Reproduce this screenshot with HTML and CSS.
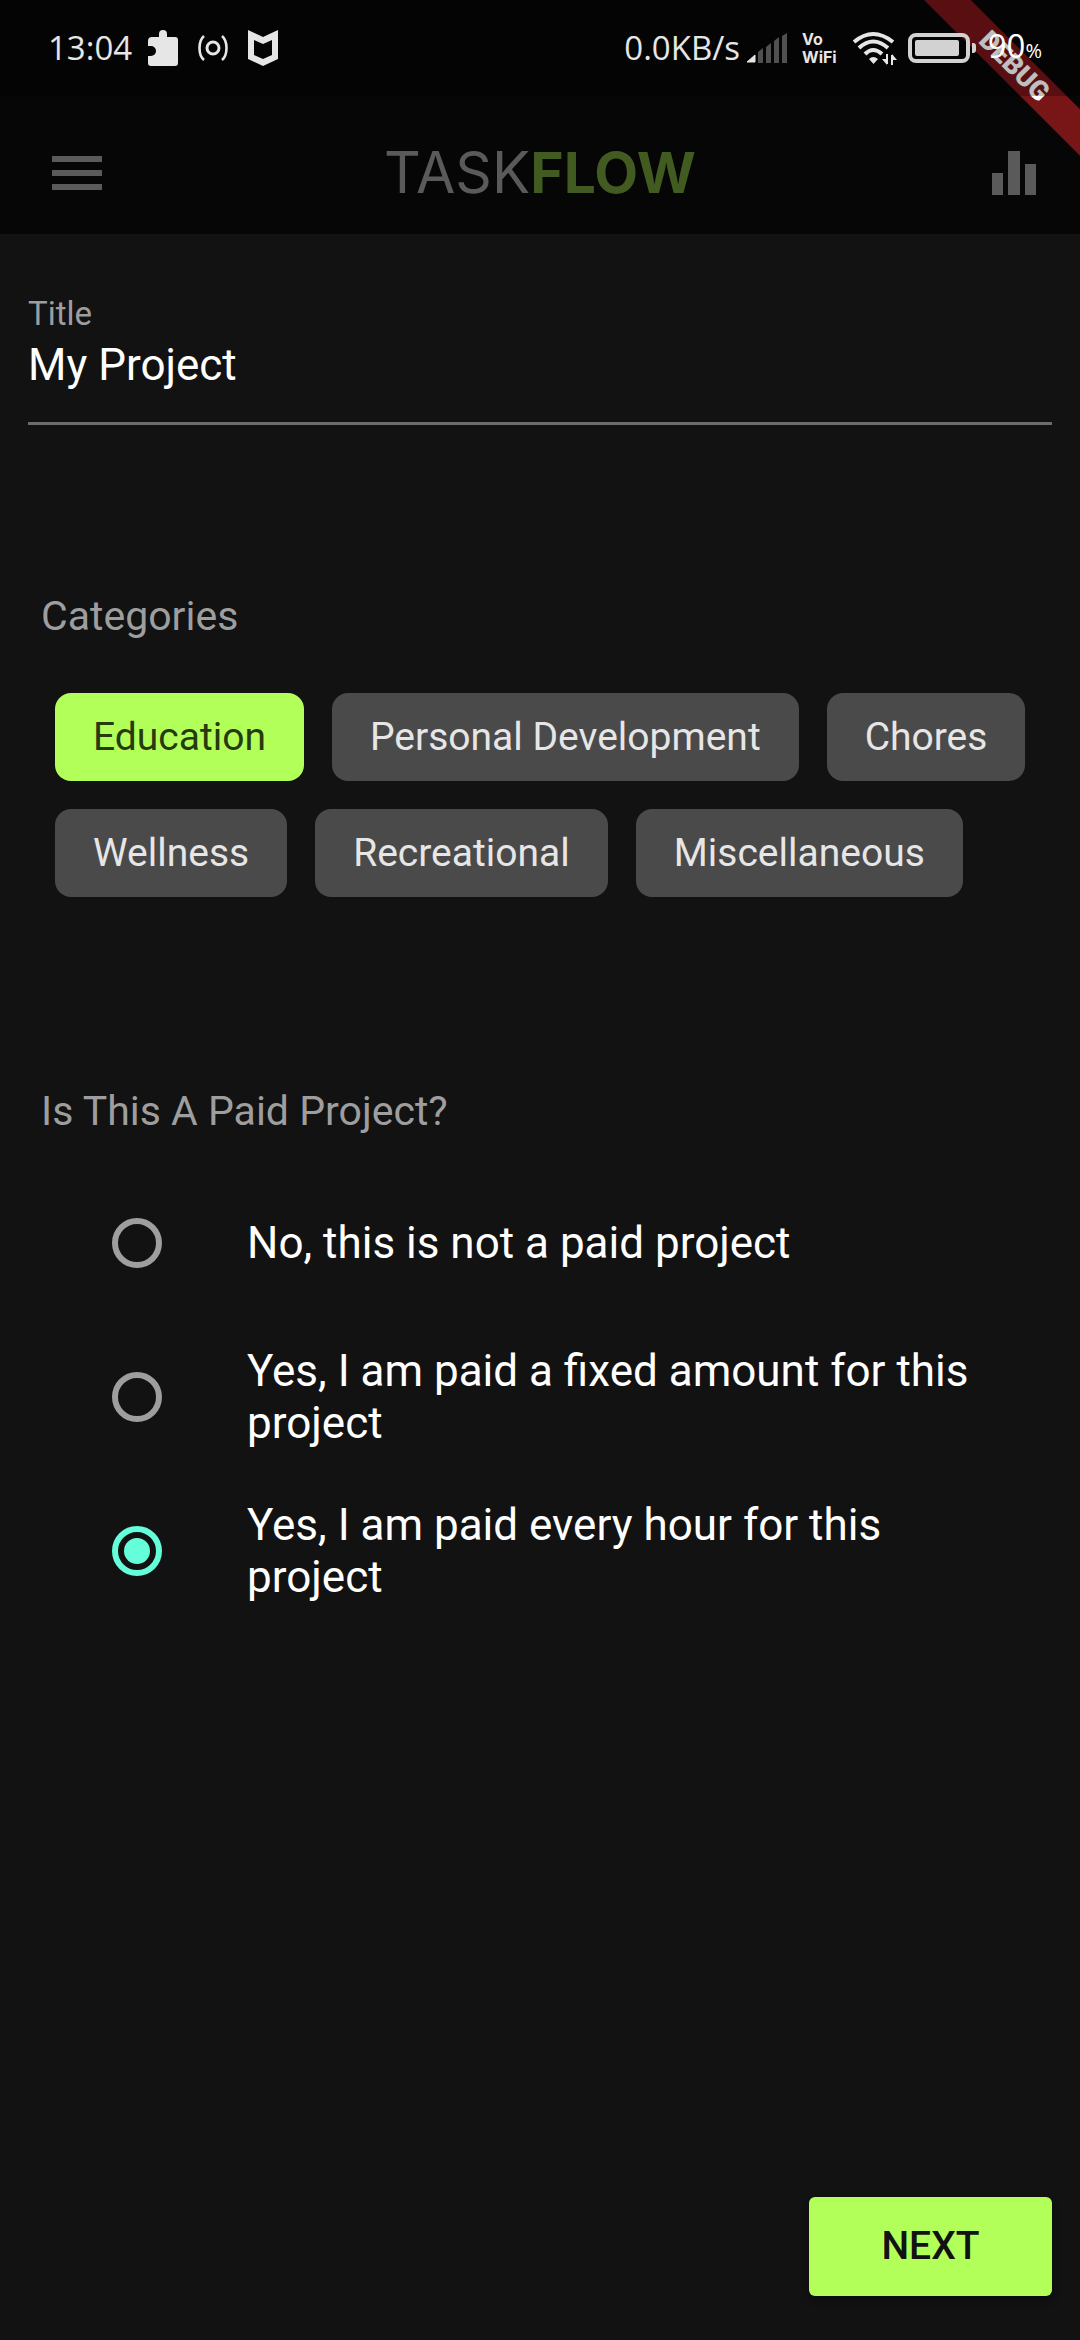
FILE: index.html
```html
<!DOCTYPE html>
<html lang="en">
<head>
<meta charset="utf-8">
<meta name="viewport" content="width=device-width, initial-scale=1">
<title>Taskflow – New project</title>
<link rel="stylesheet" href="styles.css">
</head>
<body>
<div class="app">
  <header class="top">
    <div class="status">
      <div class="status-group">
        <span class="clock">13:04</span>
        <svg width="30" height="36" viewBox="0 0 30 36" fill="currentColor" aria-hidden="true"><path d="M4 7h7V4a4 4 0 0 1 8 0v3h8a3 3 0 0 1 3 3v23a3 3 0 0 1-3 3H3a3 3 0 0 1-3-3v-7h3a5 5 0 0 0 0-10H0v-5a4 4 0 0 1 4-4z"/></svg>
        <svg width="30" height="26" viewBox="0 0 30 26" fill="none" stroke="currentColor" stroke-width="3" aria-hidden="true"><circle cx="15" cy="13" r="6"/><path d="M6 1C0 6 0 20 6 25M24 1C30 6 30 20 24 25" stroke-width="2.6"/></svg>
        <svg width="30" height="36" viewBox="0 0 30 36" fill="currentColor" aria-hidden="true"><path fill-rule="evenodd" d="M0 0l15 7 15-7v29l-15 7-15-7zM6 10v15l9 4 9-4V10l-9 4z"/></svg>
      </div>
      <div class="status-group status-right">
        <span class="speed">0.0KB/s</span>
        <svg width="41" height="30" viewBox="0 0 41 30" aria-hidden="true"><path d="M0 29l8-7v7z" fill="#e6e6e6" stroke="#e6e6e6"/><path d="M11 19l5-4v15h-5zM19 14l5-4v20h-5zM27 8l5-4v26h-5zM35 3l5-3v30h-5z" fill="#505050"/></svg>
        <span class="vowifi"><span>Vo</span><span>WiFi</span></span>
        <svg width="46" height="36" viewBox="0 0 46 36" fill="none" stroke="currentColor" stroke-width="4" aria-hidden="true"><path d="M3 12Q22 -4 42 12M8 18Q22 5 37 18M14 24Q22 16 31 24"/><path d="M18 29Q22 25 27 29L22.500 34z" fill="currentColor" stroke="none"/><path d="M36 24v10M41 25v10" stroke-width="2"/><path d="M31 29h5v6zM41 24l5 6h-5z" fill="currentColor" stroke="none"/></svg>
        <svg width="69" height="30" viewBox="0 0 69 30" aria-hidden="true"><rect x="2" y="2" width="58" height="26" rx="6" fill="none" stroke="#d2d2d2" stroke-width="4"/><rect x="7" y="7" width="44" height="16" rx="2" fill="#d2d2d2"/><path d="M64 10h1a3 3 0 0 1 3 3v4a3 3 0 0 1-3 3h-1z" fill="#d2d2d2"/></svg>
        <span class="battery">90<small>%</small></span>
      </div>
    </div>
    <div class="debug"><span class="ribbon">DEBUG</span></div>
    <nav class="bar">
      <button class="icon-button menu" type="button" aria-label="Menu"><svg width="50" height="34" viewBox="0 0 50 34" fill="currentColor"><path d="M0 0h50v6H0zM0 14h50v6H0zM0 28h50v6H0z"/></svg></button>
      <h1 class="logo">TASK<b>FLOW</b></h1>
      <button class="icon-button stats" type="button" aria-label="Statistics"><svg width="44" height="44" viewBox="0 0 44 44" fill="currentColor"><path d="M0 22h11v22H0zM16 0h12v44H16zM33 13h11v31H33z"/></svg></button>
    </nav>
  </header>
  <main>
    <form class="form">
      <div class="field">
        <label for="title">Title</label>
        <input id="title" type="text" value="My Project">
      </div>
      <section class="categories">
        <h2>Categories</h2>
        <div class="chips">
          <button type="button" class="chip selected" aria-pressed="true">Education</button>
          <button type="button" class="chip" aria-pressed="false">Personal Development</button>
          <button type="button" class="chip" aria-pressed="false">Chores</button>
          <button type="button" class="chip" aria-pressed="false">Wellness</button>
          <button type="button" class="chip" aria-pressed="false">Recreational</button>
          <button type="button" class="chip" aria-pressed="false">Miscellaneous</button>
        </div>
      </section>
      <fieldset class="paid">
        <legend>Is This A Paid Project?</legend>
        <label class="option"><input type="radio" name="paid" value="none"><span>No, this is not a paid project</span></label>
        <label class="option"><input type="radio" name="paid" value="fixed"><span>Yes, I am paid a fixed amount for this project</span></label>
        <label class="option"><input type="radio" name="paid" value="hourly" checked><span>Yes, I am paid every hour for this project</span></label>
      </fieldset>
      <button class="next" type="submit">NEXT</button>
    </form>
  </main>
</div>
</body>
</html>
```
FILE: styles.css
```css
* {
  box-sizing: border-box;
}

body {
  margin: 0;
  background: #121212;
  color: #fff;
  font-family: Roboto, "Liberation Sans", sans-serif;
}

button,
input {
  font: inherit;
  border: 0;
}

svg {
  display: block;
  flex: none;
}

.app {
  display: flex;
  flex-direction: column;
  min-height: 100vh;
}

/* Header: system status strip above the app bar */
.top {
  position: relative;
  overflow: hidden;
  background: #060606;
}

.status {
  position: relative;
  z-index: 2;
  display: flex;
  justify-content: space-between;
  align-items: center;
  height: 96px;
  padding: 0 38px 0 48px;
  background: rgba(0, 0, 0, 0.25);
  color: #e6e6e6;
  font-family: "Open Sans", "Noto Sans", sans-serif;
  font-size: 33px;
  line-height: 40px;
}

.status-group {
  display: flex;
  align-items: center;
  gap: 20px;
}

.status-right {
  gap: 11px;
}

.clock,
.speed {
  margin-right: -4px;
}

.vowifi {
  display: flex;
  flex-direction: column;
  margin: 0 3px;
  font-family: Inter, sans-serif;
  font-size: 16px;
  font-weight: 700;
  line-height: 18px;
}

.battery {
  color: #fff;
}

.battery small {
  font-size: 20px;
}

.bar {
  display: grid;
  grid-template-columns: 1fr auto 1fr;
  align-items: center;
  height: 138px;
  padding-top: 16px;
}

.icon-button {
  padding: 0;
  background: none;
  color: #5a5a5a;
}

.menu {
  justify-self: start;
  margin-left: 52px;
}

.stats {
  justify-self: end;
  margin-right: 44px;
}

.logo {
  margin: 0;
  color: #5a5a5a;
  font-family: Inter, sans-serif;
  font-size: 57px;
  font-weight: 400;
  line-height: 64px;
}

.logo b {
  color: #415b20;
  font-weight: 700;
}

/* Corner ribbon, lying over the header */
.debug {
  position: absolute;
  z-index: 1;
  top: 0;
  right: 0;
  width: 160px;
  height: 160px;
  overflow: hidden;
  pointer-events: none;
}

.ribbon {
  position: absolute;
  top: 50px;
  left: -36px;
  width: 260px;
  background: #771517;
  font-size: 27px;
  font-weight: 900;
  line-height: 33px;
  text-align: center;
  transform: rotate(45deg);
}

/* Form */
main,
.form {
  display: flex;
  flex: 1;
  flex-direction: column;
}

.form {
  padding: 61px 28px 44px;
}

.field {
  display: flex;
  flex-direction: column;
  gap: 6px;
}

.field label {
  color: #9e9e9e;
  font-size: 33px;
  line-height: 38px;
}

.field input {
  width: 100%;
  height: 86px;
  padding: 0 0 31px;
  border-bottom: 3px solid #6c6c6c;
  border-radius: 0;
  background: none;
  color: #fff;
  font-size: 44px;
  line-height: 52px;
  outline: 0;
}

.categories {
  margin-top: 167px;
}

h2,
legend {
  margin: 0;
  padding: 0 13px;
  color: #9e9e9e;
  font-size: 41px;
  font-weight: 400;
  line-height: 48px;
}

.chips {
  display: flex;
  flex-wrap: wrap;
  gap: 28px;
  margin-top: 53px;
  padding: 0 26px 0 27px;
}

.chip {
  padding: 0 38px;
  border-radius: 16px;
  background: #4a4a4a;
  color: #e6e6e6;
  font-size: 39px;
  line-height: 88px;
}

.chip.selected {
  background: #b2ff59;
  color: #263a0e;
}

.paid {
  margin: 190px 0 0;
  padding: 0;
  border: 0;
}

legend {
  margin-bottom: 31px;
}

.option {
  display: flex;
  align-items: center;
  gap: 85px;
  min-height: 154px;
  padding: 0 44px 0 84px;
  font-size: 44px;
  line-height: 52px;
}

.option input {
  display: grid;
  flex: none;
  place-content: center;
  width: 50px;
  height: 50px;
  margin: 0;
  border: 6px solid #9e9e9e;
  border-radius: 50%;
  appearance: none;
}

.option input:checked {
  border-color: #64ffda;
}

.option input:checked::before {
  width: 26px;
  height: 26px;
  border-radius: 50%;
  background: #64ffda;
  content: "";
}

.next {
  align-self: flex-end;
  min-width: 243px;
  margin-top: auto;
  padding: 0 64px;
  border-radius: 6px;
  background: #b2ff59;
  box-shadow: 0 4px 8px rgba(0, 0, 0, 0.4);
  color: #121212;
  font-size: 39px;
  font-weight: 500;
  line-height: 99px;
}
```
